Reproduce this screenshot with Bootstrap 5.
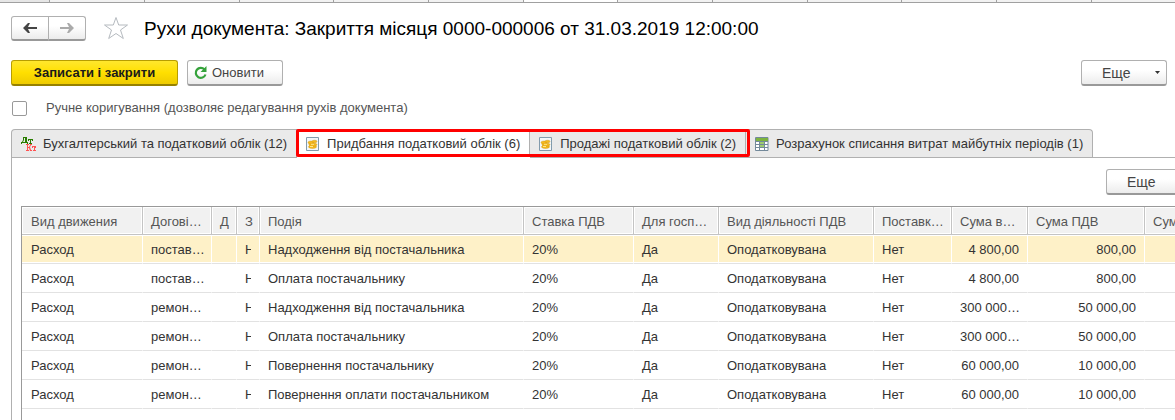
<!DOCTYPE html>
<html lang="uk">
<head>
<meta charset="utf-8">
<meta name="viewport" content="width=device-width, initial-scale=1">
<title>Рухи документа</title>
<link href="https://cdn.jsdelivr.net/npm/bootstrap@5.3.0/dist/css/bootstrap.min.css" rel="stylesheet">
<script src="https://cdn.jsdelivr.net/npm/bootstrap@5.3.0/dist/js/bootstrap.bundle.min.js" defer></script>
<style>
body { font: 13px/18px "Liberation Sans", Arial, sans-serif; color: #333; overflow-x: hidden; background: #fff; }
.window-strip { height: 3px; background: #f2f2f2; border-bottom: 1px solid #a0a0a0; overflow: hidden; }
.window-strip span { flex: 0 0 95px; border-right: 1px solid #a0a0a0; }
.window-strip span:nth-child(3n+4) { flex-basis: 94px; }
.window-strip span:first-child { flex-basis: 50px; background: #e6e6e6; }
.window-strip .current { background: #fff; }
.tool-row { padding: 0 8px 0 11px; }
.title-row { padding-top: 11px; }
.doc-title { font-size: 19px; line-height: 26px; padding-top: 2px; color: #000; font-weight: 400; margin-left: 15px; white-space: nowrap; }
.star { margin-left: 17px; }
.command-row { padding-top: 18px; gap: 9px; }
.btn-tool { font-size: 13px; line-height: 18px; color: #444; height: 26px; padding: 0 8px; border: 1px solid #b0b0b0; border-bottom: 2px solid #999; border-radius: 3px; background: linear-gradient(#fff 40%, #ececec); }
.btn-save { background: linear-gradient(#ffe72e, #ffdf00 50%, #eecb00); border-color: #b79d00; border-bottom-color: #968100; color: #1a1a1a; font-weight: 700; width: 167px; }
.btn-refresh { width: 96px; padding: 0 6px; }
.btn-more { width: 86px; padding: 0 6px 0 20px; font-size: 14px; }
.btn-step { width: 38px; height: 25px; }
.manual-check[type=checkbox] { width: 15px; height: 15px; margin: 0 0 0 1px; border: 1px solid #999; border-radius: 2px; }
.manual-row { gap: 19px; color: #555; padding-top: 13px; padding-bottom: 12px; }
.doc-tabs { margin-left: 11px; border-bottom: 1px solid #b0b0b0; flex-wrap: nowrap; }
.doc-tabs .nav-link { height: 28px; padding: 0 9px; gap: 7px; border: 1px solid #b0b0b0; border-width: 1px 1px 0 0; border-radius: 0; background: #eaeaea; color: #333; margin: 0; display: flex; align-items: center; white-space: nowrap; }
.doc-tabs > li:first-child .nav-link { border-left-width: 1px; border-top-left-radius: 4px; }
.doc-tabs > li:last-child .nav-link { border-top-right-radius: 4px; }
.doc-tabs .nav-link.active { background: #fff; color: #333; box-shadow: 0 1px #fff; }
.marked { position: relative; }
.marked::after { content: ""; position: absolute; inset: 0 -4px 0 -1px; border: 3px solid #f00; border-radius: 2px; pointer-events: none; z-index: 2; }
.panel { margin-left: 11px; border-left: 1px solid #b0b0b0; padding: 11px 0 0 9px; overflow: hidden; }
.list-tools { padding-bottom: 11px; margin-right: -17px; }
.grid-wrap { border-top: 1px solid #999; border-left: 1px solid #999; overflow: hidden; }
.moves { table-layout: fixed; width: 1220px; border-collapse: separate; border-spacing: 0; margin: 0; }
.moves th, .moves td { height: 29px; padding: 2px 8px 0 8px; white-space: nowrap; border: 0 solid #e2e2e2; border-bottom-width: 1px; color: #333; }
.moves th { font-weight: 400; color: #555; background: #f1f1f1; border-right: 1px solid #c4c4c4; border-bottom-color: #c4c4c4; box-shadow: inset 0 0 0 1px #fff; height: 28px; }
.moves td { border-right: 1px solid transparent; }
.moves tr > :first-child { padding-left: 9px; }
.moves .sum { text-align: right; }
.moves .picked td { background: #fef1c8; border-right-color: #fff; box-shadow: inset 0 -1px 0 #fff, inset 0 1px 0 #fff; }
.clip { display: block; width: 6px; overflow: hidden; }
.grid-rest { height: 11px; }
</style>
</head>
<body>
<div class="window-strip d-flex"><span></span><span></span><span></span><span></span><span></span><span></span><span class="current"></span><span></span><span></span><span></span><span></span><span></span></div>
<header class="tool-row title-row d-flex align-items-center">
  <div class="btn-group">
    <button class="btn btn-tool btn-step d-flex align-items-center justify-content-center" type="button" aria-label="Назад"><svg width="14" height="10" viewBox="0 0 14 10"><path d="M5 0h2L5 4h9v2H5l2 4H5L0 5z" fill="#444"/></svg></button>
    <button class="btn btn-tool btn-step d-flex align-items-center justify-content-center" type="button" aria-label="Вперед"><svg width="14" height="10" viewBox="0 0 14 10"><path d="M9 0H7l2 4H0v2h9l-2 4h2l5-5z" fill="#aaa"/></svg></button>
  </div>
  <svg class="star flex-shrink-0" width="26" height="24" viewBox="0 0 26 24"><path d="m13 1.500 2.700 7.500h8.800l-7 5 2.800 8.500-7.300-5-7.300 5L8.500 14l-7-5h8.800z" fill="#fff" stroke="#b5babf"/></svg>
  <h1 class="doc-title mb-0">Рухи документа: Закриття місяця 0000-000006 от 31.03.2019 12:00:00</h1>
</header>
<div class="tool-row command-row d-flex align-items-center">
  <button class="btn btn-tool btn-save" type="button">Записати і закрити</button>
  <button class="btn btn-tool btn-refresh d-flex align-items-center gap-1" type="button"><svg width="14" height="14" viewBox="0 0 14 14"><path d="M10.500 3.500A5 5 0 1 0 11.500 8.500" fill="none" stroke="#35a23b" stroke-width="2.200"/><path d="M12.500 0v6h-6z" fill="#35a23b"/></svg>Оновити</button>
  <button class="btn btn-tool btn-more d-flex align-items-center justify-content-between ms-auto" type="button">Еще <svg width="5" height="3" viewBox="0 0 5 3"><path d="M0 0h5L2.500 3z" fill="#333"/></svg></button>
</div>
<div class="tool-row manual-row d-flex align-items-center">
  <input class="form-check-input manual-check" type="checkbox" id="manual">
  <label for="manual">Ручне коригування (дозволяє редагування рухів документа)</label>
</div>
<ul class="nav doc-tabs">
  <li><a class="nav-link" href="#"><svg width="15" height="16" viewBox="0 0 15 16"><path fill-rule="evenodd" d="M2 1h4v5h1v2H6V7H1v1H0V6h1l1-2zm1 1v2L2 6h2V2zM7 3h5v2h-1V4h-1v3h1v1H8V7h1V4H8v1H7z" fill="#2a7d00"/><path d="M5 8h3v1H7v2h1l1-2V8h2v1h-1l-1 2 1 3h1v1H9l-1-3H7v2h1v1H5v-1h1V9H5zM11 10h4v2h-1v-1v3h1v1h-3v-1h1v-3h-1v1h-1z" fill="#ff5252"/></svg>Бухгалтерський та податковий облік (12)</a></li>
  <li class="marked"><ul class="nav flex-nowrap">
    <li><a class="nav-link active" href="#moves"><svg width="14" height="14" viewBox="0 0 14 14"><path d="M.5.500h12v13H.5z" fill="#f3f7fa" stroke="#829bad"/><g fill="#f5b91c" stroke="#c9900c" stroke-width=".4"><ellipse cx="6.500" cy="9.800" rx="4" ry="1.700"/><ellipse cx="7" cy="7.600" rx="4" ry="1.700"/><ellipse cx="5" cy="5.500" rx="3" ry="1.500"/><ellipse cx="8.500" cy="4.500" rx="2.500" ry="1.300"/></g><path d="M4 9.500h3M5 7.300h3" stroke="#ffe68a"/></svg>Придбання податковий облік (6)</a></li>
    <li><a class="nav-link" href="#"><svg width="14" height="14" viewBox="0 0 14 14"><path d="M.5.500h12v13H.5z" fill="#f3f7fa" stroke="#829bad"/><g fill="#f5b91c" stroke="#c9900c" stroke-width=".4"><ellipse cx="6.500" cy="9.800" rx="4" ry="1.700"/><ellipse cx="7" cy="7.600" rx="4" ry="1.700"/><ellipse cx="5" cy="5.500" rx="3" ry="1.500"/><ellipse cx="8.500" cy="4.500" rx="2.500" ry="1.300"/></g><path d="M4 9.500h3M5 7.300h3" stroke="#ffe68a"/></svg>Продажі податковий облік (2)</a></li>
  </ul></li>
  <li><a class="nav-link" href="#"><svg width="14" height="14" viewBox="0 0 14 14"><path d="M.5.500h12.500v13H.5z" fill="#fff" stroke="#73899a"/><path d="M1 1h12v3H1z" fill="#7db43f"/><path d="M1 4.500h12M1 7.500h12M1 10.500h12M4.500 4v9M9.500 4v9" stroke="#73899a"/><path d="M5 5h4v2H5zM5 8h4v2H5z" fill="#9dcc70"/></svg>Розрахунок списання витрат майбутніх періодів (1)</a></li>
</ul>
<main class="panel" id="moves">
  <div class="list-tools d-flex justify-content-end">
    <button class="btn btn-tool btn-more d-flex align-items-center justify-content-between" type="button">Еще <svg width="5" height="3" viewBox="0 0 5 3"><path d="M0 0h5L2.500 3z" fill="#333"/></svg></button>
  </div>
  <div class="grid-wrap">
    <table class="moves">
      <colgroup><col style="width:121px"><col style="width:69px"><col style="width:25px"><col style="width:23px"><col style="width:264px"><col style="width:110px"><col style="width:85px"><col style="width:155px"><col style="width:78px"><col style="width:76px"><col style="width:117px"><col></colgroup>
      <thead><tr><th>Вид движения</th><th>Догові…</th><th>Д</th><th>З</th><th>Подія</th><th>Ставка ПДВ</th><th>Для госп…</th><th>Вид діяльності ПДВ</th><th>Поставк…</th><th>Сума в…</th><th>Сума ПДВ</th><th>Сум</th></tr></thead>
      <tbody>
        <tr class="picked"><td>Расход</td><td>постав…</td><td></td><td><span class="clip">Н</span></td><td>Надходження від постачальника</td><td>20%</td><td>Да</td><td>Оподатковувана</td><td>Нет</td><td class="sum">4 800,00</td><td class="sum">800,00</td><td></td></tr>
        <tr><td>Расход</td><td>постав…</td><td></td><td><span class="clip">Н</span></td><td>Оплата постачальнику</td><td>20%</td><td>Да</td><td>Оподатковувана</td><td>Нет</td><td class="sum">4 800,00</td><td class="sum">800,00</td><td></td></tr>
        <tr><td>Расход</td><td>ремон…</td><td></td><td><span class="clip">Н</span></td><td>Надходження від постачальника</td><td>20%</td><td>Да</td><td>Оподатковувана</td><td>Нет</td><td>300 000…</td><td class="sum">50 000,00</td><td></td></tr>
        <tr><td>Расход</td><td>ремон…</td><td></td><td><span class="clip">Н</span></td><td>Оплата постачальнику</td><td>20%</td><td>Да</td><td>Оподатковувана</td><td>Нет</td><td>300 000…</td><td class="sum">50 000,00</td><td></td></tr>
        <tr><td>Расход</td><td>ремон…</td><td></td><td><span class="clip">Н</span></td><td>Повернення постачальнику</td><td>20%</td><td>Да</td><td>Оподатковувана</td><td>Нет</td><td class="sum">60 000,00</td><td class="sum">10 000,00</td><td></td></tr>
        <tr><td>Расход</td><td>ремон…</td><td></td><td><span class="clip">Н</span></td><td>Повернення оплати постачальником</td><td>20%</td><td>Да</td><td>Оподатковувана</td><td>Нет</td><td class="sum">60 000,00</td><td class="sum">10 000,00</td><td></td></tr>
      </tbody>
    </table>
    <div class="grid-rest"></div>
  </div>
</main>
</body>
</html>
